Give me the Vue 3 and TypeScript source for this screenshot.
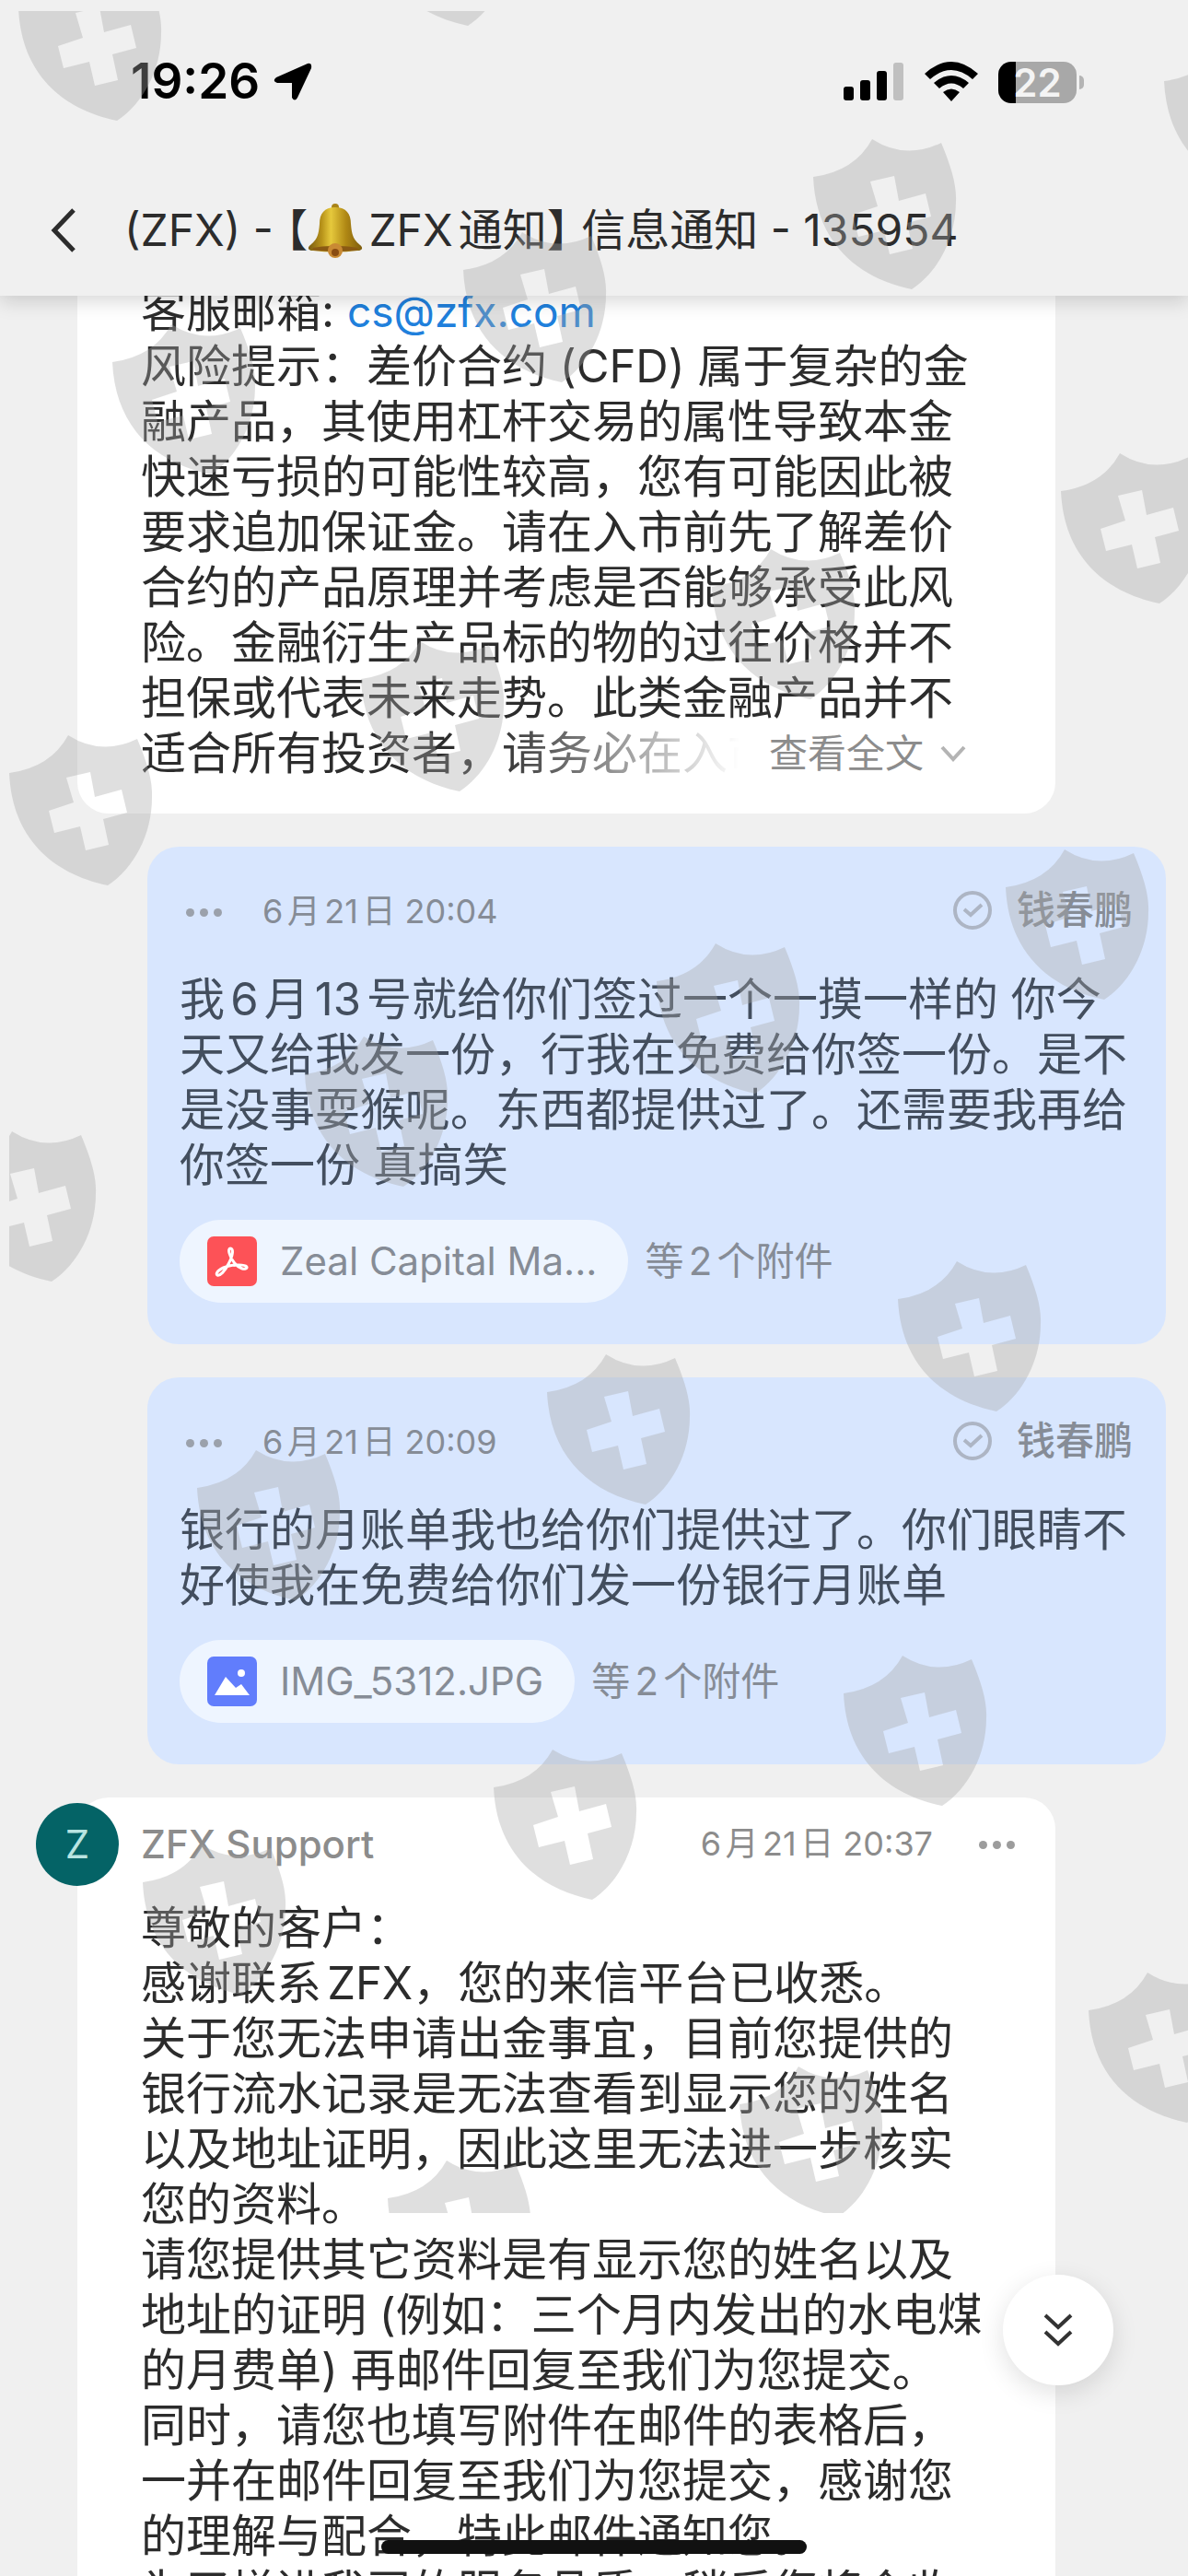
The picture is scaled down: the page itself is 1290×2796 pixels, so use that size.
<script setup lang="ts">
interface OutgoingMail {
  time: string
  sender: string
  lines: string[]
  kind: 'pdf' | 'image'
  file: string
}

const riskLines: string[] = [
  '风险提示：差价合约 (CFD) 属于复杂的金',
  '融产品，其使用杠杆交易的属性导致本金',
  '快速亏损的可能性较高，您有可能因此被',
  '要求追加保证金。请在入市前先了解差价',
  '合约的产品原理并考虑是否能够承受此风',
  '险。金融衍生产品标的物的过往价格并不',
  '担保或代表未来走势。此类金融产品并不',
]

const outgoing: OutgoingMail[] = [
  {
    time: '6月21日 20:04',
    sender: '钱春鹏',
    lines: [
      '我6月13号就给你们签过一个一摸一样的 你今',
      '天又给我发一份，行我在免费给你签一份。是不',
      '是没事耍猴呢。东西都提供过了。还需要我再给',
      '你签一份 真搞笑',
    ],
    kind: 'pdf',
    file: 'Zeal Capital Ma...',
  },
  {
    time: '6月21日 20:09',
    sender: '钱春鹏',
    lines: ['银行的月账单我也给你们提供过了。你们眼睛不', '好使我在免费给你们发一份银行月账单'],
    kind: 'image',
    file: 'IMG_5312.JPG',
  },
]

const replyLines: string[] = [
  '尊敬的客户：',
  '感谢联系ZFX，您的来信平台已收悉。',
  '关于您无法申请出金事宜，目前您提供的',
  '银行流水记录是无法查看到显示您的姓名',
  '以及地址证明，因此这里无法进一步核实',
  '您的资料。',
  '请您提供其它资料是有显示您的姓名以及',
  '地址的证明 (例如：三个月内发出的水电煤',
  '的月费单) 再邮件回复至我们为您提交。',
  '同时，请您也填写附件在邮件的表格后，',
  '一并在邮件回复至我们为您提交，感谢您',
  '的理解与配合，特此邮件通知您。',
  '为了增进我司的服务品质，稍后您将会收',
]

// Anchor of every shield in the scattered watermark
const shields: [number, number][] = [
  [20, -32], [401, -135], [503, 252], [122, 352], [883, 151], [1264, 47],
  [392, 696], [10, 798], [1152, 492], [773, 596], [1092, 922], [331, 1125],
  [-51, 1228], [713, 1024], [975, 1369], [594, 1470], [214, 1574], [536, 1899],
  [155, 2002], [916, 1797], [421, 2345], [803, 2243], [1182, 2141],
]
</script>

<template>
  <div class="screen">
    <header class="top">
      <div class="status">
        <div class="clock">
          <span>19:26</span>
          <svg width="44" height="44" viewBox="0 0 44 44"><path d="M38 2 Q43 1 42 7 L27 39 Q24 44 21 39 V23 H5 Q-1 21 4 17 Z" /></svg>
        </div>
        <div class="signals">
          <svg width="66" height="44" viewBox="0 0 66 44">
            <rect x="0" y="27" width="11" height="15" rx="3" />
            <rect x="18" y="20" width="11" height="22" rx="3" />
            <rect x="36" y="10" width="11" height="32" rx="3" />
            <rect x="54" y="1" width="11" height="41" rx="3" fill="#c0c0c0" />
          </svg>
          <svg width="58" height="44" viewBox="0 0 58 44">
            <path d="M0 13 Q29 -13 58 13 L52 19 Q29 -1 6 19 Z M10 23 Q29 7 48 23 L42 29 Q29 18 16 29 Z M20 33 Q29 26 38 33 L29 43 Z" />
          </svg>
          <div class="battery">
            <span class="cell">22</span>
            <i class="tip"></i>
          </div>
        </div>
      </div>
      <div class="bar">
        <button class="back" aria-label="返回">
          <svg width="28" height="48" viewBox="0 0 28 48" fill="none" stroke="#2c2c2c" stroke-width="5"><path d="M25 2 L4 24 L25 46" /></svg>
        </button>
        <h1 class="title">
          <span>(ZFX) - 【</span>
          <svg class="bell" width="60" height="60" viewBox="0 0 60 60" aria-label="铃">
            <defs>
              <linearGradient id="gold" x1="0" x2="1" y1="0" y2="0">
                <stop offset="0" stop-color="#7a5c10" />
                <stop offset=".25" stop-color="#b8931a" />
                <stop offset=".42" stop-color="#e6c93c" />
                <stop offset=".7" stop-color="#b08814" />
                <stop offset="1" stop-color="#7d5c0e" />
              </linearGradient>
            </defs>
            <rect x="26" y="1" width="8" height="9" rx="4" fill="#a98318" />
            <path d="M30 5 C42 5 47 12 47 23 C48 36 50 40 57 46 C61 49 59 52 54 52 Q30 55 6 52 C1 52 -1 49 3 46 C10 40 12 36 13 23 C13 12 18 5 30 5 Z" fill="url(#gold)" />
            <ellipse cx="30" cy="50" rx="25" ry="3" fill="#8a5a14" />
            <circle cx="30" cy="52" r="8" fill="#c98a34" />
            <circle cx="30" cy="54" r="4" fill="#8a4c12" />
          </svg>
          <span>ZFX通知】 信息通知 - 135954</span>
        </h1>
      </div>
    </header>

    <main class="thread">
      <article class="card incoming clipped">
        <p class="line">客服邮箱: <a href="mailto:cs@zfx.com">cs@zfx.com</a></p>
        <p v-for="line in riskLines" :key="line" class="line">{{ line }}</p>
        <div class="last">
          <p class="line fading">适合所有投资者，请务必在入市</p>
          <button class="more">
            查看全文
            <svg width="28" height="18" viewBox="0 0 28 18" fill="none" stroke="#b4b4b4" stroke-width="4"><path d="M2 2 L14 15 L26 2" /></svg>
          </button>
        </div>
      </article>

      <article v-for="mail in outgoing" :key="mail.time" class="card outgoing">
        <div class="meta">
          <button class="dots" aria-label="更多"><i></i><i></i><i></i></button>
          <time class="time">{{ mail.time }}</time>
          <svg class="sent" width="42" height="42" viewBox="0 0 42 42" fill="none" stroke="#adb5c4" stroke-width="4">
            <circle cx="21" cy="21" r="19" />
            <path d="M12 20 L19 26 L31 15" />
          </svg>
          <strong class="sender">{{ mail.sender }}</strong>
        </div>
        <p v-for="line in mail.lines" :key="line" class="line">{{ line }}</p>
        <div class="files">
          <button class="chip">
            <svg v-if="mail.kind === 'pdf'" width="54" height="54" viewBox="0 0 54 54">
              <rect width="54" height="54" rx="7" fill="#fd5257" />
              <path d="M25 13 C29 13 28 21 23 30 C19 38 14 43 11 42 C8 40 14 34 24 32 C34 30 44 31 43 34 C42 37 34 35 29 28 C24 22 22 13 25 13 Z" fill="none" stroke="#fff" stroke-width="3" />
            </svg>
            <svg v-else width="54" height="54" viewBox="0 0 54 54">
              <rect width="54" height="54" rx="7" fill="#617dfc" />
              <circle cx="37" cy="18" r="4" fill="#fff" />
              <path d="M8 42 L20 22 L31 34 L37 30 L46 42 Z" fill="#fff" />
            </svg>
            <span>{{ mail.file }}</span>
          </button>
          <span class="count">等2个附件</span>
        </div>
      </article>

      <article class="card incoming reply">
        <div class="meta">
          <span class="avatar">Z</span>
          <strong class="sender">ZFX Support</strong>
          <time class="time">6月21日 20:37</time>
          <button class="dots" aria-label="更多"><i></i><i></i><i></i></button>
        </div>
        <p v-for="line in replyLines" :key="line" class="line">{{ line }}</p>
      </article>
    </main>

    <svg class="watermark" aria-hidden="true">
      <defs>
        <path
          id="shield"
          fill-rule="evenodd"
          d="M64 0 Q100 23 139 4 C150 30 156 50 155 68 C155 108 135 145 107 163 C45 150 3 110 0 41 Q45 35 64 0 Z M62 46 L88 40 L93 67 L122 59 L128 84 L102 91 L108 119 L83 125 L77 99 L49 106 L43 82 L70 73 Z"
        />
      </defs>
      <svg x="10" y="12" width="100%" height="2390">
        <use v-for="([x, y], i) in shields" :key="i" href="#shield" :x="x - 10" :y="y - 12" />
      </svg>
    </svg>

    <button class="jump" aria-label="跳到底部">
      <svg width="32" height="36" viewBox="0 0 32 36" fill="none" stroke="#333" stroke-width="4"><path d="M2 2 L16 15 L30 2 M2 20 L16 33 L30 20" /></svg>
    </button>
    <div class="home"></div>
  </div>
</template>

<style>
body {
  margin: 0;
  background: #f0f0f0;
}
</style>

<style scoped>
.screen {
  position: relative;
  display: flex;
  flex-direction: column;
  height: 100vh;
  overflow: hidden;
  background: #f0f0f0;
  color: #2c2c2c;
  font-family: Inter, "Noto Sans CJK SC", sans-serif;
  font-size: 49px;
  line-height: 1.2;
  text-autospace: normal;
}
button {
  padding: 0;
  border: 0;
  background: none;
  color: inherit;
  font: inherit;
}
svg {
  flex: none;
}
.top {
  position: relative;
  z-index: 1;
  flex: none;
  background: #f0f0f0;
  box-shadow: 0 6px 20px rgba(0, 0, 0, 0.16);
}
.status {
  display: flex;
  align-items: center;
  justify-content: space-between;
  height: 178px;
  padding: 0 113px 0 142px;
}
.clock {
  display: flex;
  align-items: center;
  gap: 14px;
  color: #000;
  font-size: 53px;
  font-weight: 600;
}
.signals {
  display: flex;
  align-items: center;
  gap: 22px;
}
.battery {
  display: flex;
  align-items: center;
  gap: 3px;
}
.cell {
  width: 85px;
  height: 45px;
  border-radius: 14px;
  background: linear-gradient(to right, #000 19px, #a8a8a8 19px);
  color: #f4f4f4;
  font-size: 42px;
  font-weight: 600;
  line-height: 45px;
  text-align: center;
}
.tip {
  width: 5px;
  height: 15px;
  border-radius: 0 5px 5px 0;
  background: #b4b4b4;
}
.bar {
  display: flex;
  align-items: center;
  gap: 52px;
  height: 143px;
  padding: 0 55px;
}
.back {
  display: flex;
}
.title {
  display: flex;
  align-items: center;
  margin: 0;
  font-size: 48px;
  font-weight: 400;
  font-feature-settings: "halt";
  white-space: pre;
}
.bell {
  margin-right: 6px;
}
.thread {
  flex: 1;
  min-height: 0;
}
.card {
  box-sizing: border-box;
  border-radius: 34px;
}
.incoming {
  margin: 0 144px 36px 84px;
  padding: 0 36px 35px 69px;
  background: #fff;
}
.clipped {
  margin-top: -13px;
  border-radius: 0 0 34px 34px;
}
.outgoing {
  margin: 0 24px 36px 160px;
  padding: 45px 36px 45px 35px;
  background: #d8e6fe;
  color: #434e5e;
}
.line {
  margin: 0;
  line-height: 60px;
  white-space: pre;
}
.line a {
  color: #2080dc;
  font-size: 46px;
  text-decoration: none;
}
.last {
  display: flex;
  align-items: center;
}
.fading {
  width: 686px;
  margin-right: -4px;
  mask-image: linear-gradient(to right, #000 380px, transparent 650px);
}
.more {
  display: flex;
  align-items: center;
  gap: 18px;
  height: 60px;
  color: #8c8c8c;
  font-size: 42px;
}
.meta {
  display: flex;
  align-items: center;
  height: 48px;
  margin-bottom: 43px;
  color: #868c96;
}
.dots {
  display: flex;
  gap: 6px;
}
.dots i {
  width: 9px;
  height: 9px;
  border-radius: 50%;
  background: #9ba1ab;
}
.time {
  font-size: 36px;
}
.sender {
  font-size: 42px;
  font-weight: 500;
}
.outgoing .dots {
  margin: 0 44px 0 7px;
}
.outgoing .dots,
.outgoing .time {
  padding-top: 4px;
}
.outgoing .sender {
  margin-left: 27px;
}
.sent {
  margin-left: auto;
}
.files {
  display: flex;
  align-items: center;
  gap: 18px;
  margin-top: 29px;
  color: #868c96;
  font-size: 42px;
}
.chip {
  display: flex;
  align-items: center;
  gap: 25px;
  height: 90px;
  padding: 0 34px 0 30px;
  border-radius: 45px;
  background: #eef5ff;
}
.reply {
  padding-top: 27px;
}
.reply .meta {
  margin-bottom: 37px;
  color: #8c8c8c;
}
.reply .dots {
  margin: 0 8px 0 50px;
}
.reply .dots i {
  background: #9c9c9c;
}
.reply .time {
  margin-left: auto;
}
.avatar {
  width: 90px;
  margin: 0 24px 0 -114px;
  border-radius: 50%;
  background: #046366;
  color: #b9e4e1;
  font-size: 42px;
  line-height: 90px;
  text-align: center;
}
.watermark {
  position: absolute;
  inset: 0;
  z-index: 2;
  width: 100%;
  height: 100%;
  fill: #a8a8a8;
  opacity: 0.36;
  pointer-events: none;
}
.jump {
  position: absolute;
  right: 81px;
  bottom: 207px;
  z-index: 3;
  display: flex;
  align-items: center;
  justify-content: center;
  width: 120px;
  height: 120px;
  border-radius: 50%;
  background: #fff;
  box-shadow: 0 8px 28px rgba(0, 0, 0, 0.12);
}
.home {
  position: absolute;
  bottom: 24px;
  left: 50%;
  z-index: 3;
  width: 462px;
  height: 15px;
  margin-left: -231px;
  border-radius: 8px;
  background: #111;
}
</style>
